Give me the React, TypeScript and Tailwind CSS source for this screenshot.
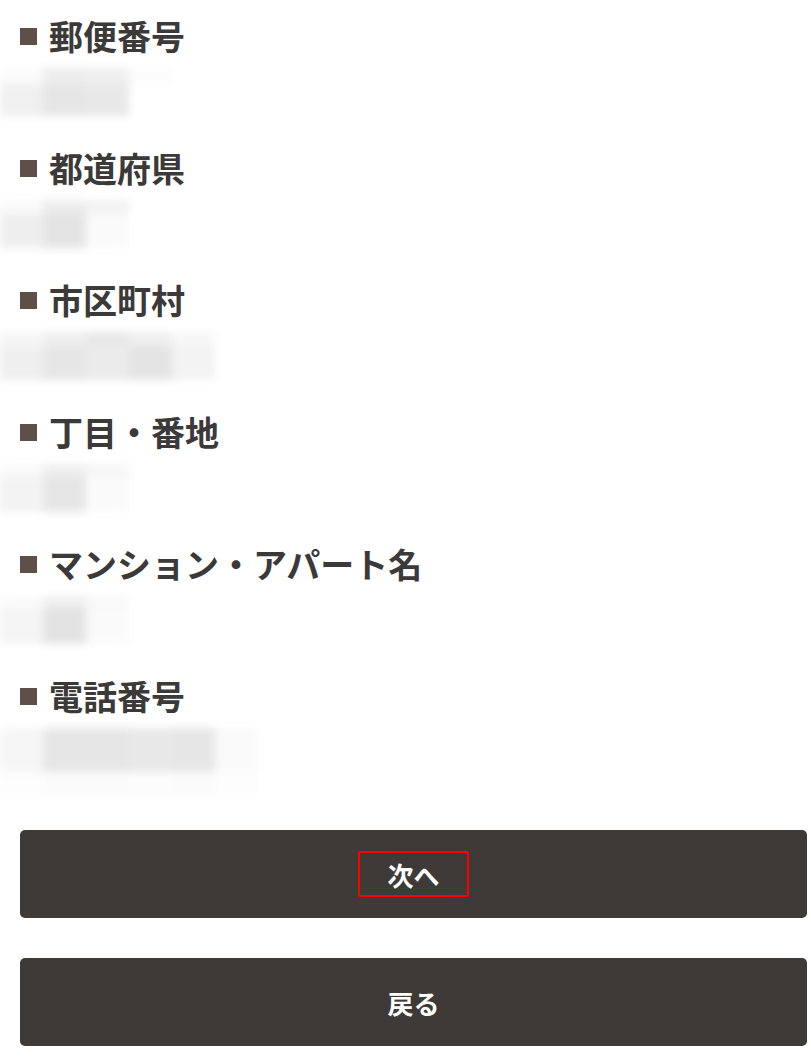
import React from 'react';

type Field = {
  label: string;
  rows: string[][];
  rowHeights: number[];
};

const fields: Field[] = [
  { label: '郵便番号', rows: [['#fbfbfb', '#ededed', '#efefef', '#fcfcfc'], ['#f0f0f0', '#e6e6e6', '#e8e8e8']], rowHeights: [16, 32] },
  { label: '都道府県', rows: [['#fafafa', '#ececec', '#f2f2f2'], ['#eeeeee', '#e4e4e4', '#fafafa']], rowHeights: [14, 34] },
  { label: '市区町村', rows: [['#f6f6f6', '#efefef', '#e7e7e7', '#f0f0f0', '#f7f7f7'], ['#efefef', '#e6e6e6', '#ebebeb', '#e4e4e4', '#f3f3f3']], rowHeights: [14, 34] },
  { label: '丁目・番地', rows: [['#fafafa', '#efefef', '#f6f6f6'], ['#f3f3f3', '#e6e6e6', '#fafafa']], rowHeights: [12, 36] },
  { label: 'マンション・アパート名', rows: [['#fafafa', '#f0f0f0', '#f8f8f8'], ['#f5f5f5', '#e3e3e3', '#fafafa']], rowHeights: [12, 36] },
  { label: '電話番号', rows: [['#f6f6f6', '#e6e6e6', '#e6e6e6', '#e8e8e8', '#e6e6e6', '#fafafa'], ['#fdfdfd', '#fbfbfb', '#fbfbfb', '#fcfcfc', '#fbfbfb', '#fdfdfd']], rowHeights: [44, 26] },
];

const Mosaic: React.FC<{ rows: string[][]; rowHeights: number[] }> = ({ rows, rowHeights }) => (
  <div className="blur-[4px]">
    {rows.map((cells, i) => (
      <div key={i} className="flex">
        {cells.map((c, j) => (
          <div key={j} className="w-[43px]" style={{ backgroundColor: c, height: rowHeights[i] }} />
        ))}
      </div>
    ))}
  </div>
);

const App: React.FC = () => {
  return (
    <div
      className="w-[811px] bg-white pt-[16px]"
      style={{ fontFamily: '"Noto Sans CJK JP", "Noto Sans", sans-serif' }}
    >
      {fields.map((f, i) => (
        <div key={f.label} className={i === fields.length - 1 ? 'mb-[32px]' : 'mb-[32px]'}>
          <div className="flex h-[40px] items-center pl-[20px]">
            <span className="mr-[12px] h-[17px] w-[17px] bg-[#5e4f48]" />
            <span className="text-[34px] font-bold leading-none text-[#3b3a39]">{f.label}</span>
          </div>
          <div className="mt-[12px]">
            <Mosaic rows={f.rows} rowHeights={f.rowHeights} />
          </div>
        </div>
      ))}

      <div className="flex flex-col gap-[40px] pl-[20px] pr-[4px] pb-[14px]">
        <button className="flex h-[88px] w-[787px] items-center justify-center rounded-[5px] bg-[#3e3a37]">
          <span className="flex h-[46px] w-[111px] items-center justify-center rounded-[2px] border-2 border-[#ff0000] text-[26px] font-bold text-white">
            次へ
          </span>
        </button>
        <button className="flex h-[88px] w-[787px] items-center justify-center rounded-[5px] bg-[#3e3a37] text-[26px] font-bold text-white">
          戻る
        </button>
      </div>
    </div>
  );
};

export default App;
